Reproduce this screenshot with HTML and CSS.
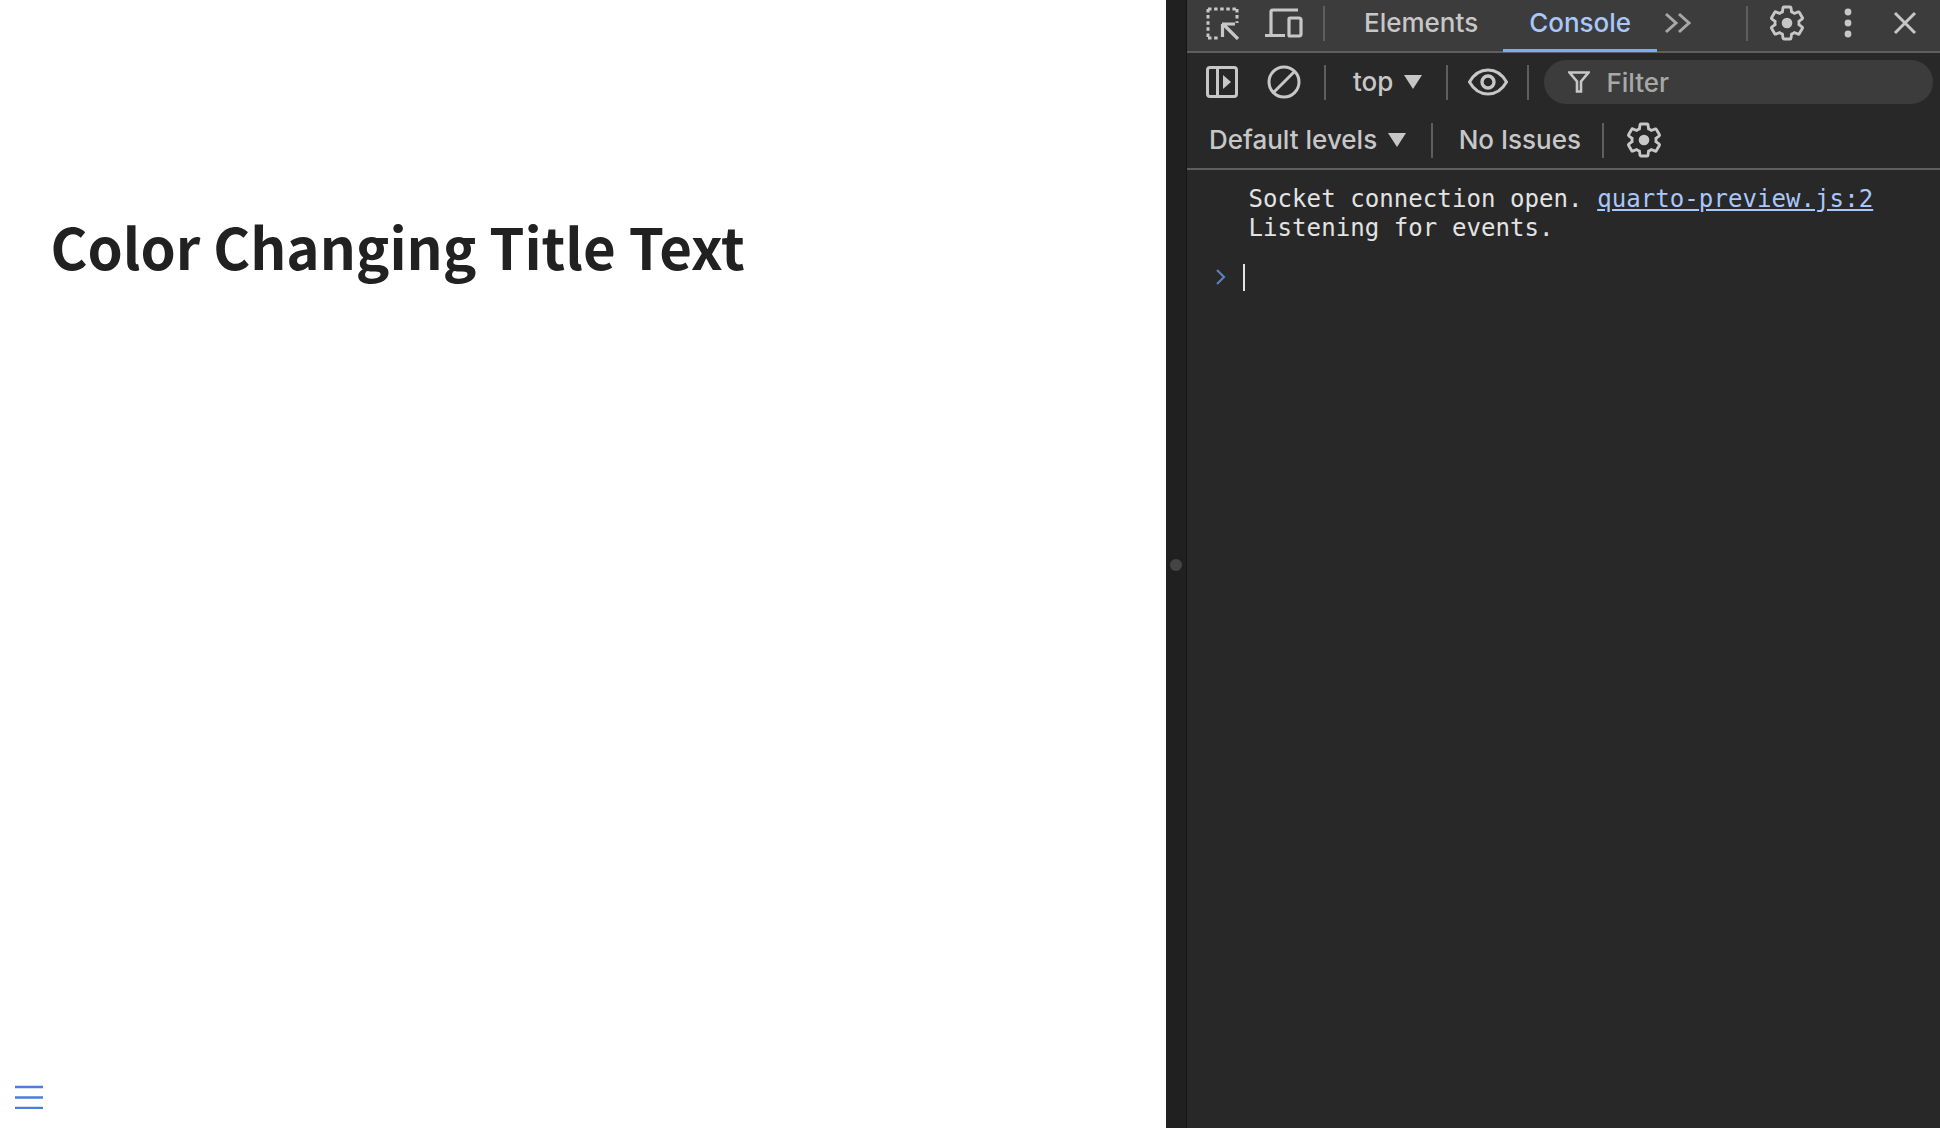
FILE: index.html
```html
<!DOCTYPE html>
<html lang="en">
<head>
<meta charset="utf-8">
<title>Color Changing Title Text</title>
<link rel="stylesheet" href="styles.css">
</head>
<body>
<main class="page">
  <h1 class="title">Color Changing Title Text</h1>
  <svg class="menu" width="28" height="24" viewBox="0 0 28 24"><path d="M0 2h28M0 12.500h28M0 23h28" stroke="#4a7de0" stroke-width="2.400" fill="none"/></svg>
</main>
<div class="splitter"><span class="grip"></span></div>
<section class="devtools">
  <header class="bar tabs">
    <svg class="ico inspect" width="34" height="34" viewBox="0 0 34 34"><path d="M2 3h29M2 3v29M31 3v14M2 32h12" fill="none" stroke="#c7c7c7" stroke-width="3" stroke-dasharray="3.500 2.600"/><path d="M16 18h13M16.500 18v13M18 19l14 14" fill="none" stroke="#c7c7c7" stroke-width="3.200"/></svg>
    <svg class="ico device" width="38" height="30" viewBox="0 0 38 30"><path d="M33 2H8a2 2 0 0 0-2 2v22M0 27.500h20M25 10h9a2 2 0 0 1 2 2v14a2 2 0 0 1-2 2h-9a1 1 0 0 1-1-1V11a1 1 0 0 1 1-1z" fill="none" stroke="#c7c7c7" stroke-width="3.200"/></svg>
    <span class="sep sep-a"></span>
    <span class="tab tab-elements">Elements</span>
    <span class="tab tab-console">Console</span>
    <svg class="ico more" width="28" height="24" viewBox="0 0 28 24"><path d="M2 3l10 9-10 9M15 3l10 9-10 9" fill="none" stroke="#a8a8a8" stroke-width="3"/></svg>
    <span class="sep sep-b"></span>
    <svg class="ico gear gear-a" width="40" height="40" viewBox="0 0 24 24"><use href="#gear-shape"/></svg>
    <svg class="ico dots" width="12" height="30" viewBox="0 0 12 30"><circle cx="6" cy="4" r="3.400" fill="#c7c7c7"/><circle cx="6" cy="15" r="3.400" fill="#c7c7c7"/><circle cx="6" cy="26" r="3.400" fill="#c7c7c7"/></svg>
    <svg class="ico close" width="24" height="24" viewBox="0 0 24 24"><path d="M2 2l20 20M22 2L2 22" fill="none" stroke="#c7c7c7" stroke-width="3"/></svg>
  </header>
  <div class="bar filterbar">
    <svg class="ico sidebar" width="32" height="32" viewBox="0 0 32 32"><rect x="1.500" y="1.500" width="29" height="29" rx="2.500" fill="none" stroke="#c7c7c7" stroke-width="3"/><path d="M11.500 2v28" stroke="#c7c7c7" stroke-width="3"/><path d="M17 9l8 7-8 7z" fill="#c7c7c7"/></svg>
    <svg class="ico block" width="34" height="34" viewBox="0 0 34 34"><circle cx="17" cy="17" r="15" fill="none" stroke="#c7c7c7" stroke-width="3"/><path d="M6.500 27.500l21-21" stroke="#c7c7c7" stroke-width="3"/></svg>
    <span class="sep sep-c"></span>
    <span class="label label-top">top</span>
    <span class="tri tri-top"></span>
    <span class="sep sep-d"></span>
    <svg class="ico eye" width="40" height="28" viewBox="0 0 40 28"><path d="M1.500 14C6 6 12.500 2 20 2s14 4 18.500 12C34 22 27.500 26 20 26S6 22 1.500 14z" fill="none" stroke="#c7c7c7" stroke-width="3"/><circle cx="20" cy="14" r="6" fill="none" stroke="#c7c7c7" stroke-width="3.400"/></svg>
    <span class="sep sep-e"></span>
    <div class="filter">
      <svg class="filter-ico" width="22" height="22" viewBox="0 0 22 22"><path d="M1.500 1.500h19l-7.500 9v10h-4v-10z" fill="none" stroke="#c7c7c7" stroke-width="2.600"/></svg>
      <span class="filter-text">Filter</span>
    </div>
  </div>
  <div class="bar levels">
    <span class="label label-levels">Default levels</span>
    <span class="tri tri-levels"></span>
    <span class="sep sep-f"></span>
    <span class="label label-issues">No Issues</span>
    <span class="sep sep-g"></span>
    <svg class="ico gear gear-b" width="40" height="40" viewBox="0 0 24 24"><use href="#gear-shape"/></svg>
  </div>
  <div class="console">
    <div class="message">
      <div class="msg-line"><span>Socket connection open. </span><a class="source" href="#">quarto-preview.js:2</a></div>
      <div class="msg-line">Listening for events.</div>
    </div>
    <div class="prompt">
      <svg class="prompt-ico" width="12" height="18" viewBox="0 0 12 18"><path d="M2 2l7 7-7 7" fill="none" stroke="#5f7fb8" stroke-width="2.200"/></svg>
      <span class="caret"></span>
    </div>
  </div>
</section>
<svg class="defs" width="0" height="0"><defs><g id="gear-shape"><path d="M19.140 12.940c.04-.3.06-.61.06-.94 0-.32-.02-.64-.07-.94l2.030-1.580c.18-.14.23-.41.12-.61l-1.920-3.320c-.12-.22-.37-.29-.59-.22l-2.390.96c-.5-.38-1.030-.7-1.620-.94l-.36-2.540c-.04-.24-.24-.41-.48-.41h-3.840c-.24 0-.43.17-.47.41l-.36 2.540c-.59.24-1.130.57-1.620.94l-2.390-.96c-.22-.08-.47 0-.59.22L2.740 8.870c-.12.21-.08.47.12.61l2.030 1.580c-.05.3-.09.63-.09.94s.02.64.07.94l-2.030 1.580c-.18.14-.23.41-.12.61l1.920 3.320c.12.22.37.29.59.22l2.390-.96c.5.38 1.030.7 1.620.94l.36 2.540c.05.24.24.41.48.41h3.840c.24 0 .44-.17.47-.41l.36-2.540c.59-.24 1.130-.56 1.620-.94l2.390.96c.22.08.47 0 .59-.22l1.920-3.320c.12-.22.07-.47-.12-.61l-2.010-1.580z" fill="none" stroke="#c7c7c7" stroke-width="1.700"/><circle cx="12" cy="12" r="3.200" fill="#c7c7c7"/></g></defs></svg>
</body>
</html>
```
FILE: styles.css
```css
html, body {
  margin: 0;
  height: 100%;
}
body {
  display: flex;
  height: 1128px;
  overflow: hidden;
  background: #fff;
  font-family: Inter, "Liberation Sans", sans-serif;
}
.defs {
  position: absolute;
}
.page {
  width: 1166px;
  flex: none;
  display: flex;
  flex-direction: column;
  justify-content: space-between;
  background: #fff;
}
.title {
  margin: 206px 0 0 50.500px;
  font: 700 56.400px/80px "Noto Sans CJK SC", "Noto Sans", sans-serif;
  color: #212121;
}
.menu {
  display: block;
  margin: 0 0 19px 15px;
}
.splitter {
  width: 20px;
  flex: none;
  background: #202020;
  border-right: 1px solid #151515;
  display: flex;
  align-items: center;
  justify-content: center;
}
.grip {
  width: 12px;
  height: 12px;
  border-radius: 50%;
  background: #444;
  margin-top: 2px;
}
.devtools {
  flex: 1;
  min-width: 0;
  display: flex;
  flex-direction: column;
  background: #282828;
  color: #c7c7c7;
}
.bar {
  display: flex;
  align-items: center;
  flex: none;
  box-sizing: border-box;
}
.tabs {
  height: 53px;
  padding: 0 0 5px 19px;
  background: #3c3c3c;
  border-bottom: 2px solid #5e5e5e;
}
.filterbar {
  height: 59px;
  padding: 0 0 1px 19px;
}
.levels {
  height: 58px;
  padding-left: 22px;
  border-bottom: 2px solid #5e5e5e;
}
.ico {
  display: block;
  flex: none;
}
.sep {
  width: 2px;
  flex: none;
  background: #5e5e5e;
  height: 35px;
}
.device { margin-left: 25px; }
.sep-a { margin-left: 20px; }
.tab {
  font-size: 26px;
  line-height: 46px;
  font-weight: 450;
  color: #c7c7c7;
  white-space: nowrap;
}
.tab-elements { margin-left: 39px; }
.tab-console {
  margin-left: 25px;
  padding: 0 26px;
  margin-bottom: -7px;
  height: 51px;
  line-height: 44px;
  box-sizing: border-box;
  border-bottom: 3px solid #7cacf8;
  color: #a8c7fa;
}
.more { margin-left: 7px; }
.sep-b { margin-left: 54px; }
.gear-a { margin-left: 19px; }
.dots { margin-left: 35px; }
.close { margin-left: 39px; }
.block { margin-left: 29px; }
.sep-c { margin-left: 23px; }
.label {
  font-size: 26px;
  line-height: 40px;
  font-weight: 450;
  color: #c7c7c7;
  white-space: nowrap;
}
.label-top { margin-left: 27px; }
.tri {
  width: 0;
  height: 0;
  flex: none;
  border-left: 9px solid transparent;
  border-right: 9px solid transparent;
  border-top: 14px solid #c7c7c7;
}
.tri-top { margin-left: 11px; }
.sep-d { margin-left: 24px; }
.eye { margin-left: 20px; }
.sep-e { margin-left: 19px; }
.filter {
  margin-left: 15px;
  width: 389px;
  height: 44px;
  flex: none;
  border-radius: 22px;
  background: #3c3c3c;
  display: flex;
  align-items: center;
  gap: 16px;
  padding-left: 24px;
  box-sizing: border-box;
}
.filter-text {
  font-size: 26px;
  font-weight: 450;
  color: #a8a8a8;
}
.filter-ico {
  display: block;
  flex: none;
}
.tri-levels { margin-left: 11px; }
.sep-f { margin-left: 25px; }
.label-issues { margin-left: 25.500px; }
.sep-g { margin-left: 20.500px; }
.gear-b { margin-left: 20px; }
.console {
  flex: 1;
  font-family: "DejaVu Sans Mono", "Liberation Mono", monospace;
  font-size: 24.050px;
  letter-spacing: 0.050px;
  color: #e3e3e3;
}
.message {
  padding: 15px 0 0 61.500px;
}
.msg-line {
  height: 29px;
  line-height: 29px;
  white-space: pre;
}
.source {
  color: #a8c7fa;
  text-decoration: underline;
}
.prompt {
  display: flex;
  align-items: center;
  height: 30px;
  margin-top: 19px;
  padding-left: 28px;
}
.prompt-ico {
  display: block;
}
.caret {
  width: 2px;
  height: 27px;
  margin-left: 16px;
  background: #e3e3e3;
}
```
